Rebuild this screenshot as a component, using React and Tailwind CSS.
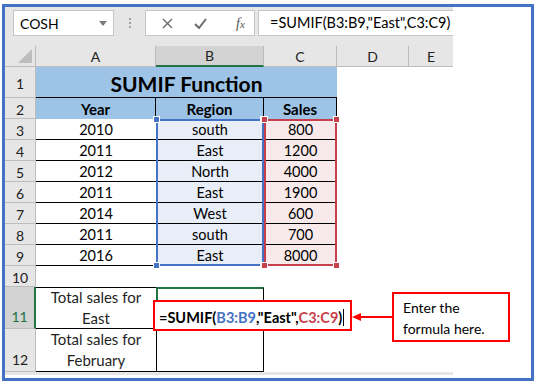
const rows = [
  ['3', '2010', 'south', '800'],
  ['4', '2011', 'East', '1200'],
  ['5', '2012', 'North', '4000'],
  ['6', '2011', 'East', '1900'],
  ['7', '2014', 'West', '600'],
  ['8', '2011', 'south', '700'],
  ['9', '2016', 'East', '8000'],
];

function RowHead({ n, className = '' }) {
  return (
    <div className={`flex items-center justify-center pt-[2px] border-r border-b border-[#bcbcbc] bg-[#e6e6e6] text-[14px] text-[#222] ${className}`}>
      {n}
    </div>
  );
}

function Handle({ pos, color }) {
  return <span className={`absolute w-[7px] h-[7px] border border-white ${color} ${pos}`} />;
}

function Range({ items, border, fill, handle }) {
  return (
    <div className={`row-span-7 relative flex flex-col ${fill}`}>
      {items.map((t, i) => (
        <div key={i} className={`h-[21px] flex items-center justify-center pt-[2px] text-[14.5px] leading-none ${i < items.length - 1 ? 'border-b border-black' : ''}`}>
          {t}
        </div>
      ))}
      <div className={`absolute inset-0 border-2 ${border}`} />
      <Handle color={handle} pos="-left-[3px] -top-[3px]" />
      <Handle color={handle} pos="-right-[3px] -top-[3px]" />
      <Handle color={handle} pos="-left-[3px] -bottom-[3px]" />
      <Handle color={handle} pos="-right-[3px] -bottom-[3px]" />
    </div>
  );
}

export default function App() {
  return (
    <div className="relative w-[539px] h-[386px] bg-white pt-[4px] pl-[2px] font-[Lato,'Liberation_Sans',sans-serif] text-black">
      <div className="w-[532px] h-[377px] border-[3px] border-[#4472c4] flex">
        <div className="w-[448px] h-[368px] bg-[#e6e6e6] flex flex-col">
          {/* formula bar */}
          <div className="h-[39px] flex items-start pt-[3px] pl-[8px]">
            <div className="w-[101px] h-[26px] bg-white border border-[#c6c6c6] flex items-center justify-between pl-[6px] pr-[6px] text-[14px]">
              <span>COSH</span>
              <svg width="8" height="5" viewBox="0 0 8 5"><path d="M0 0h8L4 5z" fill="#7a7a7a" /></svg>
            </div>
            <div className="w-[31px] h-[26px] flex flex-col items-center justify-center gap-[2px]">
              <span className="w-[2px] h-[2px] bg-[#a0a0a0]" />
              <span className="w-[2px] h-[2px] bg-[#a0a0a0]" />
              <span className="w-[2px] h-[2px] bg-[#a0a0a0]" />
            </div>
            <div className="w-[110px] h-[26px] bg-white border border-[#c6c6c6] flex items-center pl-[16px] gap-[21px]">
              <svg width="11" height="11" viewBox="0 0 11 11"><path d="M1 1l9 9M10 1l-9 9" stroke="#6b6b6b" strokeWidth="1.4" /></svg>
              <svg width="13" height="11" viewBox="0 0 13 11"><path d="M1 6l4 4 7-9" stroke="#6b6b6b" strokeWidth="2" fill="none" /></svg>
              <span className="ml-[8px] font-['Liberation_Serif',serif] italic text-[14px] text-[#555]">f<span className="text-[11px]">x</span></span>
            </div>
            <div className="ml-[3px] flex-1 h-[26px] bg-white border border-[#c6c6c6] border-r-0 flex items-center pl-[11px] text-[14.5px] whitespace-nowrap overflow-hidden">
              =SUMIF(B3:B9,"East",C3:C9)
            </div>
          </div>

          {/* grid */}
          <div className="grid grid-cols-[31px_120px_108px_73px_72px_44px] grid-rows-[21px_31px_repeat(9,21px)_42px_43px] bg-white">
            {/* header row */}
            <div className="bg-[#e6e6e6] border-r border-b border-[#bcbcbc] flex items-end justify-end pr-[3px] pb-[3px]">
              <svg width="14" height="14" viewBox="0 0 14 14"><path d="M14 0v14H0z" fill="#bdbdbd" /></svg>
            </div>
            <div className="bg-[#e6e6e6] border-r border-b border-[#bcbcbc] flex items-center justify-center text-[14px] text-[#222]">A</div>
            <div className="bg-[#d3d3d3] border-r border-[#bcbcbc] border-b-2 border-b-[#217346] flex items-center justify-center text-[14px] text-[#222]">B</div>
            <div className="bg-[#e6e6e6] border-r border-b border-[#bcbcbc] flex items-center justify-center text-[14px] text-[#222]">C</div>
            <div className="bg-[#e6e6e6] border-r border-b border-[#bcbcbc] flex items-center justify-center text-[14px] text-[#222]">D</div>
            <div className="bg-[#e6e6e6] border-b border-[#bcbcbc] flex items-center justify-center text-[14px] text-[#222]">E</div>

            {/* row 1 */}
            <RowHead n="1" className="items-end pb-[3px]" />
            <div className="col-span-3 bg-[#9dc3e6] border-b border-black flex items-center justify-center text-[21px] font-bold leading-none pt-[2px]">SUMIF Function</div>
            <div />
            <div />

            {/* row 2 */}
            <RowHead n="2" />
            {['Year', 'Region', 'Sales'].map((h) => (
              <div key={h} className="bg-[#9dc3e6] border-r border-black flex items-center justify-center pt-[2px] text-[15px] font-bold">{h}</div>
            ))}
            <div />
            <div />

            {/* rows 3-9 */}
            {rows.map((r, i) => (
              <>
                <RowHead key={`h${r[0]}`} n={r[0]} />
                <div key={`a${r[0]}`} className="border-b border-black flex items-center justify-center pt-[2px] text-[14.5px]">{r[1]}</div>
                {i === 0 && (
                  <>
                    <Range items={rows.map((x) => x[2])} border="border-[#4472c4]" fill="bg-[#e8eef8]" handle="bg-[#4472c4]" />
                    <Range items={rows.map((x) => x[3])} border="border-[#c8404c]" fill="bg-[#f8eaea]" handle="bg-[#c8404c]" />
                  </>
                )}
                <div key={`d${r[0]}`} />
                <div key={`e${r[0]}`} />
              </>
            ))}

            {/* row 10 */}
            <RowHead n="10" />
            <div />
            <div />
            <div />
            <div />
            <div />

            {/* row 11 */}
            <div className="flex items-end justify-center pb-[1px] border-r-2 border-r-[#217346] border-b border-[#bcbcbc] bg-[#d3d3d3] text-[14px] text-[#217346]">11</div>
            <div className="border-t border-b border-black flex flex-col items-center justify-center text-[15px] leading-[21px] text-[#1f1f1f]">
              <span>Total sales for</span>
              <span>East</span>
            </div>
            <div className="relative z-10 border-t-2 border-l-2 border-[#217346] border-b border-b-black border-r border-r-black">
              <div className="absolute left-[-5px] top-[11px] w-[199px] h-[31px] bg-white border-2 border-[#ff0000] flex items-center pl-[4px] pt-[4px] text-[14.5px] font-bold whitespace-nowrap">
                <span>=SUMIF(</span>
                <span className="text-[#4472c4]">B3:B9</span>
                <span>,"East",</span>
                <span className="text-[#c8404c]">C3:C9</span>
                <span>)</span>
                <span className="ml-[1px] w-[1px] h-[17px] bg-black" />
              </div>
            </div>
            <div />
            <div />
            <div />

            {/* row 12 */}
            <div className="flex items-end justify-center pb-[1px] border-r border-b border-[#bcbcbc] bg-[#e6e6e6] text-[14px] text-[#222]">12</div>
            <div className="border-b border-black flex flex-col items-center justify-center text-[15px] leading-[21px] text-[#1f1f1f]">
              <span>Total sales for</span>
              <span>February</span>
            </div>
            <div className="border-l border-r border-b border-black" />
            <div />
            <div />
            <div />
          </div>
        </div>
        <div className="flex-1 bg-white" />
      </div>

      {/* callout */}
      <div className="absolute left-[352px] top-[312px] flex items-center">
        <svg width="40" height="10" viewBox="0 0 40 10">
          <path d="M0 5l9-4v8z" fill="#ff0000" />
          <path d="M8 5h32" stroke="#ff0000" strokeWidth="2" />
        </svg>
      </div>
      <div className="absolute left-[392px] top-[292px] w-[118px] h-[50px] bg-white border-2 border-[#ff0000] pl-[9px] pt-[3px] text-[14px] leading-[21px]">
        Enter the
        <br />
        formula here.
      </div>
    </div>
  );
}
